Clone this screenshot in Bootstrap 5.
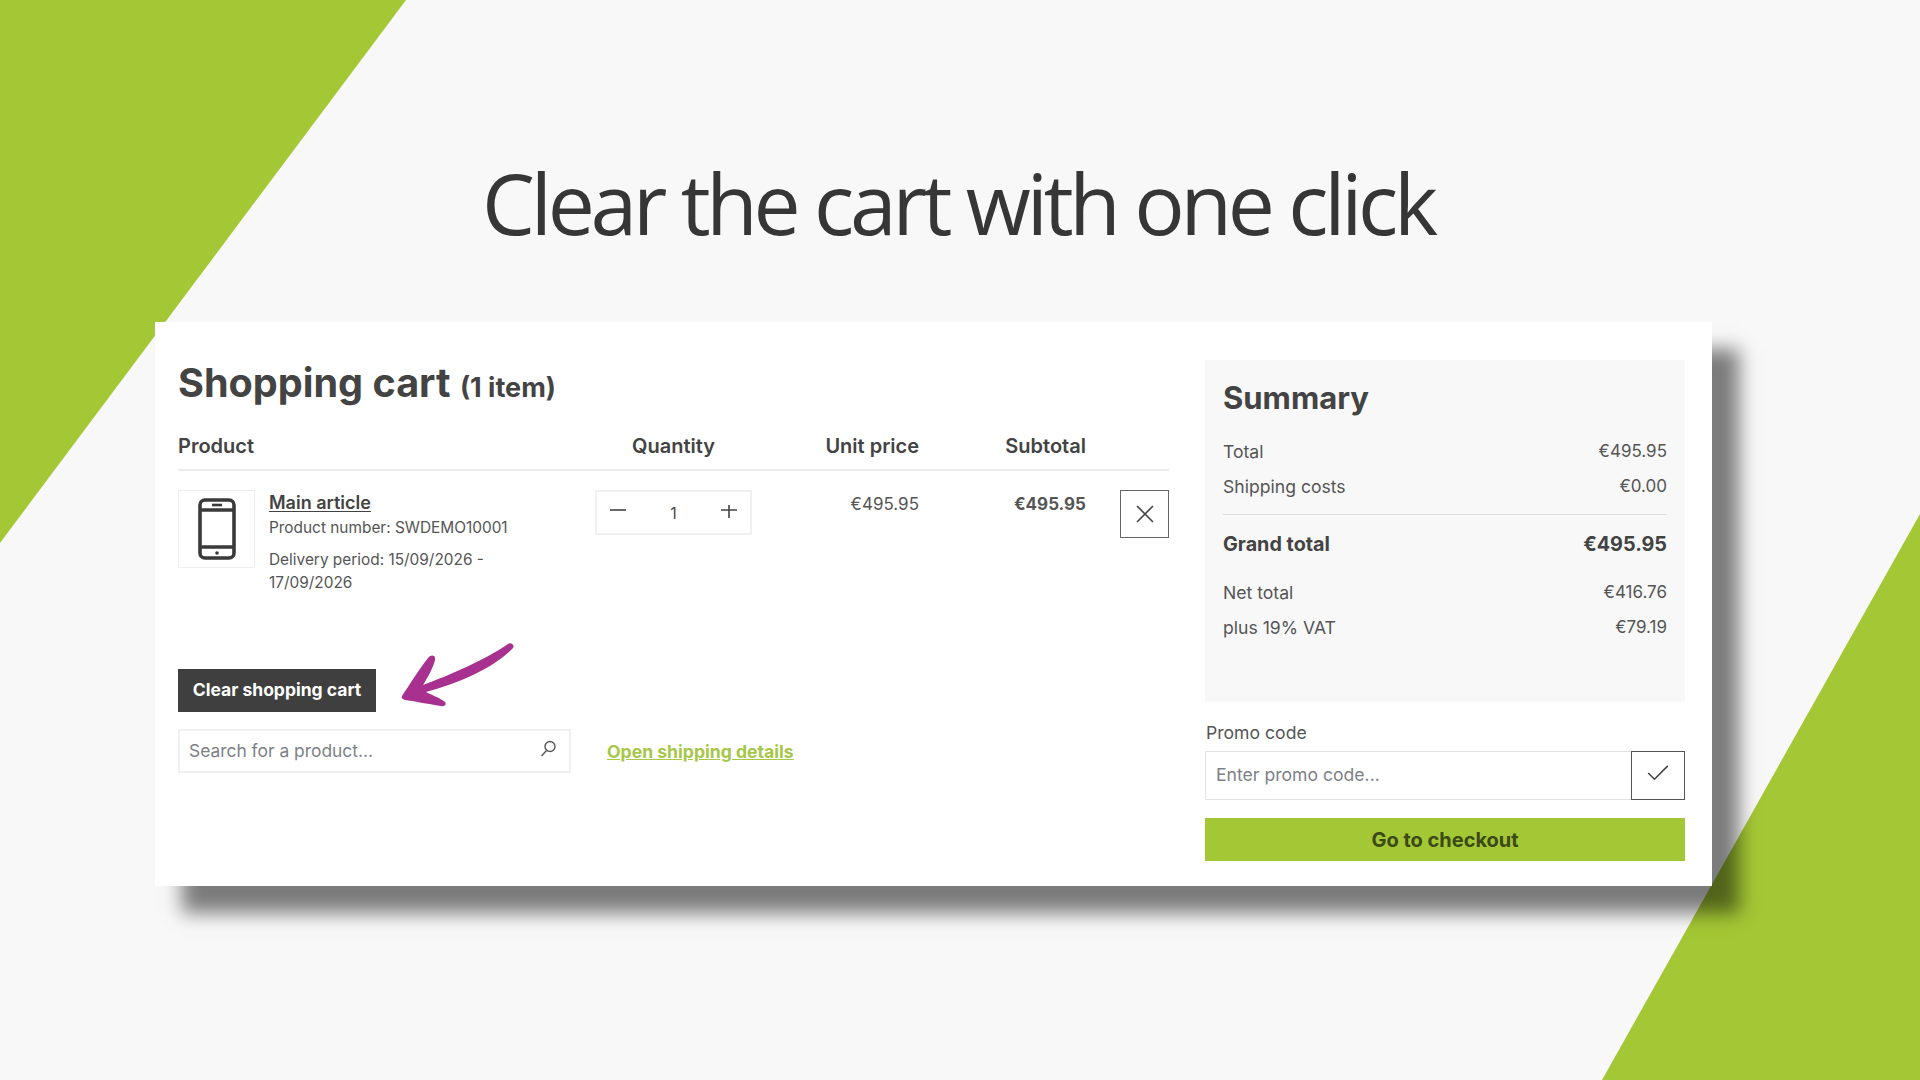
<!DOCTYPE html>
<html lang="en">
<head>
    <meta charset="UTF-8">
    <meta name="viewport" content="width=device-width, initial-scale=1.0">
    <title>Clear the cart with one click</title>
    <link href="https://cdn.jsdelivr.net/npm/bootstrap@5.3.3/dist/css/bootstrap.min.css" rel="stylesheet">
    <script src="https://cdn.jsdelivr.net/npm/bootstrap@5.3.3/dist/js/bootstrap.bundle.min.js"></script>
    <style>
        body {
            background: #f8f8f8;
            font-family: Inter, "Liberation Sans", sans-serif;
            color: #4a4a4a;
            height: 1080px;
            overflow: hidden;
            position: relative;
        }
        .corner-left, .corner-right {
            position: absolute;
            background: #a4c735;
        }
        .corner-left {
            left: 0; top: 0; width: 406px; height: 543px;
            clip-path: polygon(0 0, 100% 0, 0 100%);
        }
        .corner-right {
            right: 0; bottom: 0; width: 318px; height: 566px;
            clip-path: polygon(100% 0, 100% 100%, 0 100%);
        }
        .slide-title {
            position: relative;
            font-family: "Open Sans", sans-serif;
            font-size: 84px;
            font-weight: 400;
            letter-spacing: -4.25px;
            color: #363636;
            line-height: 114px;
            padding: 146px 4px 0 0;
            height: 322px;
            text-align: center;
            margin: 0;
        }
        .sheet {
            position: relative;
            margin-left: 155px;
            width: 1557px;
            height: 564px;
            background: #fff;
            padding: 38px 27px 0 23px;
            box-shadow: 27px 27px 18px rgba(0,0,0,.5);
            gap: 36px;
        }
        .cart-side { width: 991px; }
        .sum-side { width: 480px; }
        .cart-head {
            font-size: 39.6px;
            font-weight: 700;
            line-height: 46px;
            color: #434343;
            margin: 0 0 17px;
        }
        .cart-head small { font-size: 27px; font-weight: 700; margin-left: 0; line-height: 1; }
        .cart-grid {
            display: grid;
            grid-template-columns: 417px 157px 167px 167px 1fr;
        }
        .grid-head {
            font-size: 20px;
            font-weight: 600;
            color: #434343;
            height: 48px;
            line-height: 46px;
            border-bottom: 2px solid #ececec;
        }
        .grid-row { padding-top: 19px; font-size: 16px; }
        .prod-cell { gap: 14px; }
        .thumb {
            width: 77px;
            height: 78px;
            border: 1px solid #efefef;
            flex-shrink: 0;
        }
        .prod-name {
            color: #434343;
            font-size: 18px;
            font-weight: 600;
            line-height: 26px;
            text-underline-offset: 2px;
        }
        .prod-text { font-size: 15.4px; line-height: 23px; width: 265px; color: #555; }
        .prod-number { margin-bottom: 9px; }
        .qty-box {
            height: 45px;
            border: 2px solid #f0f0f0;
            padding: 0 13px;
        }
        .price { font-size: 17px; line-height: 28px; color: #555; }
        .remove-btn {
            width: 49px;
            height: 48px;
            border: 1px solid #666;
            border-radius: 0;
            padding: 0;
            background: #fff;
            margin-left: auto;
            display: flex;
            align-items: center;
            justify-content: center;
        }
        .clear-row { margin-top: 46px; }
        .clear-btn {
            background: #3f3f3f;
            color: #fff;
            border: 0;
            border-radius: 0;
            height: 43px;
            width: 198px;
            padding: 0;
            font-size: 17.5px;
            font-weight: 700;
        }
        .find-row { margin-top: 17px; gap: 36px; }
        .search-box {
            width: 393px;
            height: 44px;
            border: 2px solid #f0f0f0;
            padding: 0 12px 4px 9px;
            color: #7d8187;
            font-size: 17.4px;
        }
        .search-box span { margin-top: 5px; }
        .ship-link {
            color: #a6c748;
            font-size: 17.6px;
            font-weight: 700;
            margin-top: 2px;
        }
        .sum-box {
            background: #f8f8f8;
            height: 342px;
            padding: 18px 18px 0;
            font-size: 17.6px;
            color: #555;
        }
        .sum-box h2 {
            font-size: 31px;
            font-weight: 700;
            color: #434343;
            line-height: 40px;
            margin: 0 0 16px;
        }
        .sum-line { height: 35px; line-height: 35px; }
        .sum-line span + span { font-size: 17px; }
        .sum-rule { height: 1px; background: #dedede; margin: 10px 0 12px; }
        .sum-grand {
            font-size: 19.8px;
            font-weight: 700;
            color: #434343;
            height: 35px;
            line-height: 35px;
            margin-bottom: 13px;
        }
        .promo-label { font-size: 17.6px; line-height: 24px; margin: 19px 0 6px 1px; color: #555; }
        .promo-box { height: 49px; border: 1px solid #e2e2e2; font-size: 17.6px; color: #7d8187; padding-left: 10px; }
        .promo-btn {
            width: 54px;
            height: 49px;
            margin: -1px -1px -1px auto;
            border: 1px solid #555;
            border-radius: 0;
            padding: 0 0 5px;
            background: #fff;
            display: flex;
            align-items: center;
            justify-content: center;
        }
        .checkout-btn {
            display: block;
            width: 100%;
            height: 43px;
            margin-top: 18px;
            background: #a4c735;
            border: 0;
            border-radius: 0;
            padding: 0;
            color: #3b4a14;
            font-size: 20px;
            font-weight: 700;
        }
    </style>
</head>
<body>

<div class="corner-left"></div>
<div class="corner-right"></div>

<h1 class="slide-title">Clear the cart with one click</h1>

<div class="sheet d-flex">
    <div class="cart-side">
        <h2 class="cart-head">Shopping cart <small>(1 item)</small></h2>

        <div class="cart-grid grid-head">
            <div>Product</div>
            <div class="text-center">Quantity</div>
            <div class="text-end">Unit price</div>
            <div class="text-end">Subtotal</div>
            <div></div>
        </div>

        <div class="cart-grid grid-row">
            <div class="prod-cell d-flex">
                <div class="thumb d-flex align-items-center justify-content-center">
                    <svg width="38" height="62" viewBox="0 0 38 62" fill="none" stroke="#3a3a3a" stroke-width="3.6">
                        <rect x="2" y="2" width="34" height="58" rx="5"/>
                        <path d="M2 12H36M2 49H36"/>
                        <path d="M14 7H24" stroke-width="2.6"/>
                        <circle cx="19" cy="55" r="1.8" fill="#3a3a3a" stroke="none"/>
                    </svg>
                </div>
                <div>
                    <a href="#" class="prod-name">Main article</a>
                    <div class="prod-text prod-number">Product number: SWDEMO10001</div>
                    <div class="prod-text">Delivery period: 15/09/2026 - 17/09/2026</div>
                </div>
            </div>
            <div>
                <div class="qty-box d-flex align-items-center justify-content-between">
                    <svg width="16" height="16" viewBox="0 0 16 16" stroke="#444" stroke-width="1.6"><path d="M0 5H16"/></svg>
                    <span>1</span>
                    <svg width="16" height="16" viewBox="0 0 16 16" stroke="#444" stroke-width="1.6"><path d="M0 5H16M8 -3V13"/></svg>
                </div>
            </div>
            <div class="text-end price">€495.95</div>
            <div class="text-end price fw-bold">€495.95</div>
            <div>
                <button type="button" class="remove-btn">
                    <svg width="18" height="18" viewBox="0 0 18 18" stroke="#444" stroke-width="1.6"><path d="M1 1L17 17M17 1L1 17"/></svg>
                </button>
            </div>
        </div>

        <div class="clear-row d-flex align-items-end">
            <button type="button" class="clear-btn">Clear shopping cart</button>
            <svg class="ms-4" width="115" height="72" viewBox="400 640 115 72">
                <path fill="#a8308f" d="M402 696C410 684 420 668 428 658C431 654 436 655 435 660C433 668 428 677 423 685C450 675 485 660 508 644C511 642 515 645 513 648C495 667 460 683 426 692C432 695 440 698 445 702C447 705 444 707 441 706C428 704 413 701 405 700C402 699 401 698 402 696Z"/>
            </svg>
        </div>

        <div class="find-row d-flex align-items-center">
            <div class="search-box d-flex align-items-center justify-content-between">
                <span>Search for a product...</span>
                <svg width="18" height="18" viewBox="0 0 18 18" fill="none" stroke="#555" stroke-width="1.4"><circle cx="11" cy="6.5" r="5"/><path d="M7.5 10.5L2.5 16"/></svg>
            </div>
            <a href="#" class="ship-link">Open shipping details</a>
        </div>
    </div>

    <div class="sum-side">
        <div class="sum-box">
            <h2>Summary</h2>
            <div class="sum-line d-flex justify-content-between"><span>Total</span><span>€495.95</span></div>
            <div class="sum-line d-flex justify-content-between"><span>Shipping costs</span><span>€0.00</span></div>
            <div class="sum-rule"></div>
            <div class="sum-grand d-flex justify-content-between"><span>Grand total</span><span>€495.95</span></div>
            <div class="sum-line d-flex justify-content-between"><span>Net total</span><span>€416.76</span></div>
            <div class="sum-line d-flex justify-content-between"><span>plus 19% VAT</span><span>€79.19</span></div>
        </div>
        <div class="promo-label">Promo code</div>
        <div class="promo-box d-flex align-items-center">
            <span>Enter promo code...</span>
            <button type="button" class="promo-btn">
                <svg width="22" height="16" viewBox="0 0 24 18" fill="none" stroke="#444" stroke-width="1.8"><path d="M1 9L8 16L23 1"/></svg>
            </button>
        </div>
        <button type="button" class="checkout-btn">Go to checkout</button>
    </div>
</div>

</body>
</html>
